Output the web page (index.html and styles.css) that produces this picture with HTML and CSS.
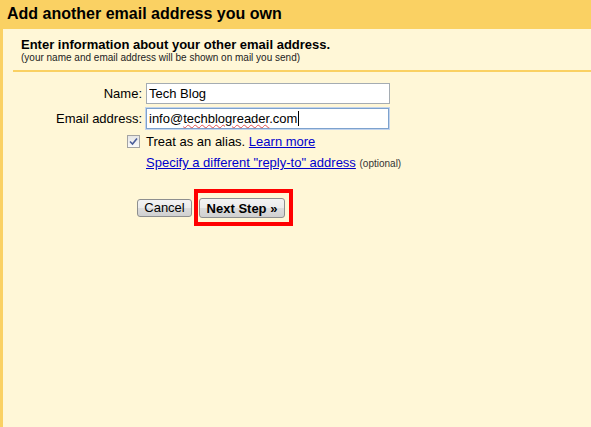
FILE: index.html
```html
<!DOCTYPE html>
<html>
<head>
<meta charset="utf-8">
<link rel="stylesheet" href="styles.css">
</head>
<body>
<div class="page">
  <div class="header">Add another email address you own</div>
  <div class="content">
    <div class="intro">
      <div class="intro-title">Enter information about your other email address.</div>
      <div class="intro-sub">(your name and email address will be shown on mail you send)</div>
    </div>
    <div class="form">
      <label class="lbl">Name:</label>
      <div class="field"><input class="inp" type="text" value="Tech Blog"></div>
      <label class="lbl">Email address:</label>
      <div class="field"><div class="inp focus">info@<span class="spell">techblogreader</span>.com<span class="caret"></span></div></div>
      <div class="chk-cell"><span class="chk"><svg width="9" height="9" viewBox="0 0 9 9"><path d="M1 4.5 L3.5 7 L8 1.5" fill="none" stroke="#4a5d9a" stroke-width="1.6"/></svg></span></div>
      <div class="opt">Treat as an alias. <a href="#">Learn more</a></div>
      <div></div>
      <div class="opt"><a href="#">Specify a different "reply-to" address</a> <span class="small">(optional)</span></div>
    </div>
    <div class="buttons">
      <button class="btn">Cancel</button>
      <span class="highlight"><button class="btn primary">Next Step »</button></span>
    </div>
  </div>
</div>
</body>
</html>
```
FILE: styles.css
```css
html, body {
  margin: 0;
  padding: 0;
}
body {
  background: #fad163;
  font-family: "Liberation Sans", Arial, sans-serif;
  color: #000;
  width: 591px;
  height: 427px;
  overflow: hidden;
}
.page {
  height: 427px;
  display: flex;
  flex-direction: column;
}
.header {
  height: 29px;
  box-sizing: border-box;
  padding: 5px 0 0 7px;
  font-size: 16px;
  font-weight: bold;
  line-height: 18px;
}
.content {
  flex: 1;
  margin-left: 3px;
  background: #fff7d7;
}
.intro {
  margin-left: 10px;
  padding: 8px 0 6px 8px;
  border-bottom: 2px solid #fad163;
}
.intro-title {
  font-size: 13px;
  font-weight: bold;
  line-height: 15px;
}
.intro-sub {
  font-size: 10px;
  line-height: 12px;
  color: #222;
}
.form {
  display: grid;
  grid-template-columns: 139px 245px;
  column-gap: 4px;
  row-gap: 4px;
  margin-top: 11px;
  font-size: 13px;
  align-items: center;
}
.lbl {
  text-align: right;
  line-height: 16px;
}
.field {
  height: 21px;
}
.inp {
  box-sizing: border-box;
  width: 244px;
  height: 21px;
  margin: 0;
  border: 1px solid #a5acb2;
  background: #fff;
  font-family: "Liberation Sans", Arial, sans-serif;
  font-size: 13px;
  padding: 1px 2px;
  line-height: 17px;
  outline: none;
}
.focus {
  border: 1px solid #7da2ce;
  box-shadow: 0 0 0 1px #c3d4ec;
  width: 243px;
}
.spell {
  text-decoration: underline wavy #e05050;
  text-decoration-thickness: 1px;
  text-underline-offset: 1px;
}
.caret {
  display: inline-block;
  width: 1px;
  height: 15px;
  background: #000;
  vertical-align: -3px;
  margin-left: 1px;
}
.chk-cell {
  display: flex;
  justify-content: flex-end;
  padding-right: 2px;
  height: 17px;
  align-items: center;
}
.chk {
  width: 11px;
  height: 11px;
  border: 1px solid #a3a3a3;
  background: linear-gradient(#e6e6e6, #fafafa);
  display: flex;
  align-items: center;
  justify-content: center;
}
.opt {
  line-height: 17px;
  white-space: nowrap;
}
.opt a {
  color: #0000cc;
  text-decoration: underline;
}
.small {
  font-size: 10px;
  color: #333;
}
.buttons {
  display: flex;
  align-items: center;
  gap: 2px;
  margin-top: 17px;
  margin-left: 134px;
}
.btn {
  font-family: "Liberation Sans", Arial, sans-serif;
  font-size: 13px;
  height: 18px;
  width: 55px;
  padding: 0;
  line-height: 15px;
  border: 1px solid #8e8f8f;
  border-radius: 3px;
  background: linear-gradient(#f3f3f3 0%, #ebebeb 50%, #dcdcdc 51%, #d0d0d0 100%);
  color: #000;
  margin: 0;
}
.primary {
  font-weight: bold;
  height: 20px;
  width: 86px;
}
.highlight {
  display: inline-flex;
  border: 4px solid #ff0000;
  padding: 5px 4px 4px 1px;
  background: #fff7d7;
}
```
